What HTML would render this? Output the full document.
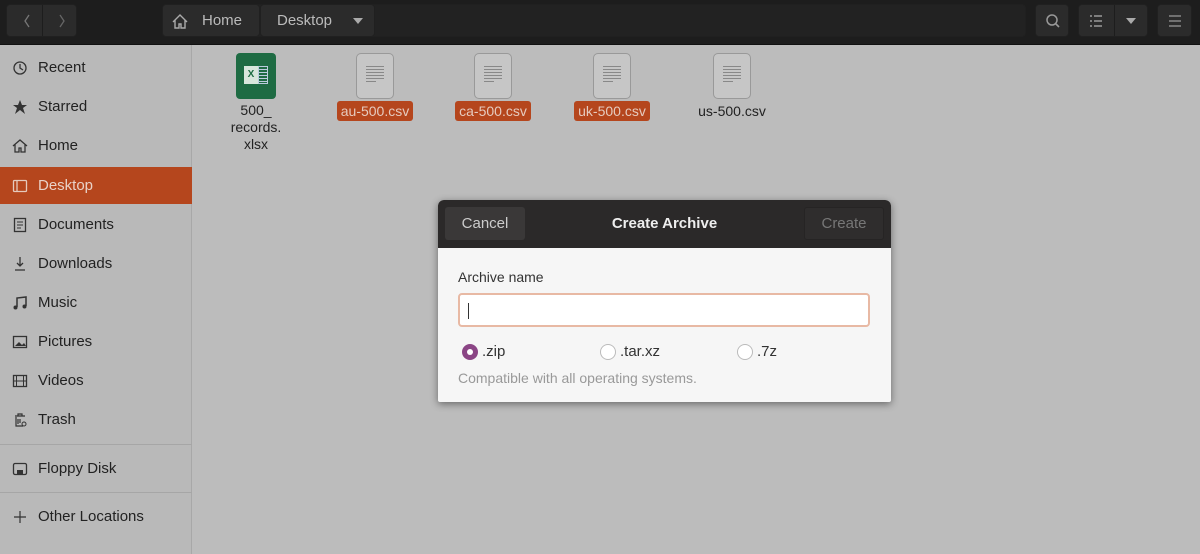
<!DOCTYPE html>
<html><head><style>
*{margin:0;padding:0;box-sizing:border-box}
body{width:1200px;height:554px;overflow:hidden;font-family:"Liberation Sans",sans-serif;background:#bcbcbc;position:relative}
.hdr{position:absolute;left:0;top:0;width:1200px;height:45px;background:#1d1d1d;border-bottom:1px solid #111}
.btn{position:absolute;top:4px;height:33px;background:#2b2b2b;border-radius:4px;border:1px solid #202020}
.side{position:absolute;left:0;top:45px;width:192px;height:509px;background:#b9b9b9;border-right:1px solid #a8a8a8}
.it{position:absolute;left:0;width:192px;height:37px;font-size:15px;color:#222;line-height:37px;padding-left:38px}
.ic{position:absolute;left:12px;top:11px;width:16px;height:16px}
.sel{background:#b5461d;color:#e9d2c8}
.sep{position:absolute;left:0;width:192px;height:1px;background:#a6a6a6}
.file{position:absolute;top:53px;text-align:center;font-size:14px;color:#222}
.doc{width:38px;height:46px;margin:0 auto;background:#c6c6c6;border:1.5px solid #999;border-radius:5px;position:relative}
.doc i{position:absolute;left:9px;width:18px;height:1px;background:#888}
.lbl{display:inline-block;margin-top:2px;padding:0 4px;line-height:20px;border-radius:3px}
.o{background:#b5461d;color:#e6cbbf}
.dlg{position:absolute;left:438px;top:200px;width:453px;height:202px;background:#f6f6f6;border-radius:6px 6px 2px 2px;box-shadow:0 2px 8px rgba(0,0,0,.45);overflow:hidden}
.dh{height:48px;background:#2b2929;position:relative}
</style></head><body>
<div class="hdr">
 <div class="btn" style="left:6px;width:71px"><div style="position:absolute;left:35px;top:0;width:1px;height:31px;background:#1d1d1d"></div>
  <svg style="position:absolute;left:15px;top:8px" width="10" height="16"><path d="M7 2L3 8l4 6" stroke="#777" stroke-width="1.3" fill="none"/></svg>
  <svg style="position:absolute;left:50px;top:8px" width="10" height="16"><path d="M3 2l4 6-4 6" stroke="#666" stroke-width="1.3" fill="none"/></svg></div>
 <div class="btn" style="left:162px;width:864px;background:#222"></div>
 <div class="btn" style="left:162px;width:98px">
  <svg style="position:absolute;left:8px;top:8px" width="18" height="17"><path d="M2 9L9 2l7 7M4 7v8h4v-4h2v4h4V7" stroke="#aaa" stroke-width="1.4" fill="none"/></svg>
  <span style="position:absolute;left:39px;top:7px;color:#bbb;font-size:15px">Home</span></div>
 <div class="btn" style="left:260px;width:115px">
  <span style="position:absolute;left:16px;top:7px;color:#bbb;font-size:15px">Desktop</span>
  <svg style="position:absolute;left:92px;top:13px" width="10" height="6"><path d="M0 0h10L5 6z" fill="#aaa"/></svg></div>
 <div class="btn" style="left:1035px;width:34px"><svg style="position:absolute;left:9px;top:8px" width="16" height="16"><circle cx="7" cy="7" r="5" stroke="#999" stroke-width="1.5" fill="none"/><path d="M11 11l3 3" stroke="#999" stroke-width="1.6"/></svg></div>
 <div class="btn" style="left:1078px;width:70px"><div style="position:absolute;left:35px;top:0;width:1px;height:31px;background:#1d1d1d"></div>
  <svg style="position:absolute;left:10px;top:9px" width="14" height="14"><path d="M1 2h2M1 7h2M1 12h2M5 2h8M5 7h8M5 12h8" stroke="#999" stroke-width="1.5"/></svg>
  <svg style="position:absolute;left:47px;top:13px" width="10" height="6"><path d="M0 0h10L5 6z" fill="#aaa"/></svg></div>
 <div class="btn" style="left:1157px;width:35px"><svg style="position:absolute;left:11px;top:9px" width="12" height="14"><path d="M0 2h12M0 7h12M0 12h12" stroke="#999" stroke-width="1.3"/></svg></div>
</div>
<div class="side">
 <div class="it" style="top:4px"><svg class="ic" viewBox="0 0 16 16"><circle cx="8" cy="8" r="6" stroke="#333" stroke-width="1.3" fill="none"/><path d="M8 4v4l3 2" stroke="#333" stroke-width="1.3" fill="none"/></svg>Recent</div>
 <div class="it" style="top:43px"><svg class="ic" viewBox="0 0 16 16"><path d="M8 1l2 5h5l-4 3 2 6-5-4-5 4 2-6-4-3h5z" fill="#333"/></svg>Starred</div>
 <div class="it" style="top:82px"><svg class="ic" viewBox="0 0 16 16"><path d="M1 8l7-6 7 6M3 6v8h4v-4h2v4h4V6" stroke="#333" stroke-width="1.3" fill="none"/></svg>Home</div>
 <div class="it sel" style="top:122px"><svg class="ic" viewBox="0 0 16 16"><rect x="1.5" y="2.5" width="13" height="11" rx="1" stroke="#e5cabd" stroke-width="1.3" fill="none"/><path d="M5 3v10" stroke="#e5cabd" stroke-width="1.3"/></svg>Desktop</div>
 <div class="it" style="top:161px"><svg class="ic" viewBox="0 0 16 16"><rect x="2.5" y="1.5" width="11" height="13" stroke="#333" stroke-width="1.3" fill="none"/><path d="M5 5h6M5 8h6M5 11h4" stroke="#333"/></svg>Documents</div>
 <div class="it" style="top:200px"><svg class="ic" viewBox="0 0 16 16"><path d="M8 1v9M5 7l3 3 3-3M3 14h10" stroke="#333" stroke-width="1.3" fill="none"/></svg>Downloads</div>
 <div class="it" style="top:239px"><svg class="ic" viewBox="0 0 16 16"><path d="M5 12V3l9-1v9" stroke="#333" stroke-width="1.5" fill="none"/><circle cx="3.5" cy="12.5" r="2" fill="#333"/><circle cx="12.5" cy="11.5" r="2" fill="#333"/></svg>Music</div>
 <div class="it" style="top:278px"><svg class="ic" viewBox="0 0 16 16"><rect x="1.5" y="2.5" width="13" height="11" stroke="#333" stroke-width="1.3" fill="none"/><path d="M3 12l4-4 3 3 2-2 2 3z" fill="#333"/></svg>Pictures</div>
 <div class="it" style="top:317px"><svg class="ic" viewBox="0 0 16 16"><rect x="1.5" y="2.5" width="13" height="11" stroke="#333" stroke-width="1.3" fill="none"/><path d="M4.5 3v10M11.5 3v10M2 8h12" stroke="#333"/></svg>Videos</div>
 <div class="it" style="top:356px"><svg class="ic" viewBox="0 0 16 16"><path d="M3 4h10M6 4V2h4v2M4 5v9h7M6 7v5M8 7v4" stroke="#333" stroke-width="1.2" fill="none"/><circle cx="12" cy="12" r="2" stroke="#333" fill="none"/></svg>Trash</div>
 <div class="sep" style="top:399px"></div>
 <div class="it" style="top:405px"><svg class="ic" viewBox="0 0 16 16"><rect x="1.5" y="2.5" width="13" height="11" rx="1.5" stroke="#333" stroke-width="1.3" fill="none"/><rect x="5" y="9" width="6" height="4" fill="#333"/></svg>Floppy Disk</div>
 <div class="sep" style="top:447px"></div>
 <div class="it" style="top:453px"><svg class="ic" viewBox="0 0 16 16"><path d="M8 2v12M2 8h12" stroke="#333" stroke-width="1.2"/></svg>Other Locations</div>
</div>
<div class="file" style="left:218px;width:76px">
 <div style="width:40px;height:46px;margin:0 auto;background:#1e6b43;border-radius:4px;position:relative">
  <div style="position:absolute;left:8px;top:13px;width:14px;height:18px;background:#d8e6dc;color:#1e6b43;font-size:10px;font-weight:bold;line-height:18px">X</div>
  <div style="position:absolute;left:22px;top:13px;width:10px;height:18px;border:1px solid #bcd;background:repeating-linear-gradient(#1e6b43 0 2px,#bcd 2px 3px)"></div></div>
 <div style="line-height:17px;margin-top:3px">500_<br>records.<br>xlsx</div></div>
<div class="file" style="left:325px;width:100px"><div class="doc"><i style="top:12px"></i><i style="top:15px"></i><i style="top:18px"></i><i style="top:21px"></i><i style="top:24px"></i><i style="top:27px;width:10px"></i></div><span class="lbl o">au-500.csv</span></div>
<div class="file" style="left:443px;width:100px"><div class="doc"><i style="top:12px"></i><i style="top:15px"></i><i style="top:18px"></i><i style="top:21px"></i><i style="top:24px"></i><i style="top:27px;width:10px"></i></div><span class="lbl o">ca-500.csv</span></div>
<div class="file" style="left:562px;width:100px"><div class="doc"><i style="top:12px"></i><i style="top:15px"></i><i style="top:18px"></i><i style="top:21px"></i><i style="top:24px"></i><i style="top:27px;width:10px"></i></div><span class="lbl o">uk-500.csv</span></div>
<div class="file" style="left:682px;width:100px"><div class="doc"><i style="top:12px"></i><i style="top:15px"></i><i style="top:18px"></i><i style="top:21px"></i><i style="top:24px"></i><i style="top:27px;width:10px"></i></div><span class="lbl">us-500.csv</span></div>
<div class="dlg">
 <div class="dh">
  <div style="position:absolute;left:7px;top:7px;width:80px;height:33px;background:#3a3838;border-radius:3px;color:#ccc;font-size:15px;line-height:33px;text-align:center">Cancel</div>
  <div style="position:absolute;left:0;width:453px;top:15px;text-align:center;color:#eee;font-size:15px;font-weight:bold">Create Archive</div>
  <div style="position:absolute;left:366px;top:7px;width:80px;height:33px;background:#2f2d2d;border:1px solid #262424;border-radius:3px;color:#777;font-size:15px;line-height:31px;text-align:center">Create</div>
 </div>
 <div style="position:absolute;left:20px;top:69px;font-size:14px;color:#333">Archive name</div>
 <div style="position:absolute;left:20px;top:93px;width:412px;height:34px;background:#fff;border:2px solid #e8b9a4;border-radius:4px"><div style="position:absolute;left:8px;top:8px;width:1px;height:16px;background:#333"></div></div>
 <div style="position:absolute;left:24px;top:144px;width:16px;height:16px;border-radius:50%;background:#8b4585"><div style="position:absolute;left:5px;top:5px;width:6px;height:6px;border-radius:50%;background:#fff"></div></div>
 <div style="position:absolute;left:44px;top:143px;font-size:15px;color:#333">.zip</div>
 <div style="position:absolute;left:162px;top:144px;width:16px;height:16px;border-radius:50%;border:1px solid #bbb;background:#fff"></div>
 <div style="position:absolute;left:182px;top:143px;font-size:15px;color:#333">.tar.xz</div>
 <div style="position:absolute;left:299px;top:144px;width:16px;height:16px;border-radius:50%;border:1px solid #bbb;background:#fff"></div>
 <div style="position:absolute;left:319px;top:143px;font-size:15px;color:#333">.7z</div>
 <div style="position:absolute;left:20px;top:170px;font-size:14px;color:#999">Compatible with all operating systems.</div>
</div>
</body></html>
